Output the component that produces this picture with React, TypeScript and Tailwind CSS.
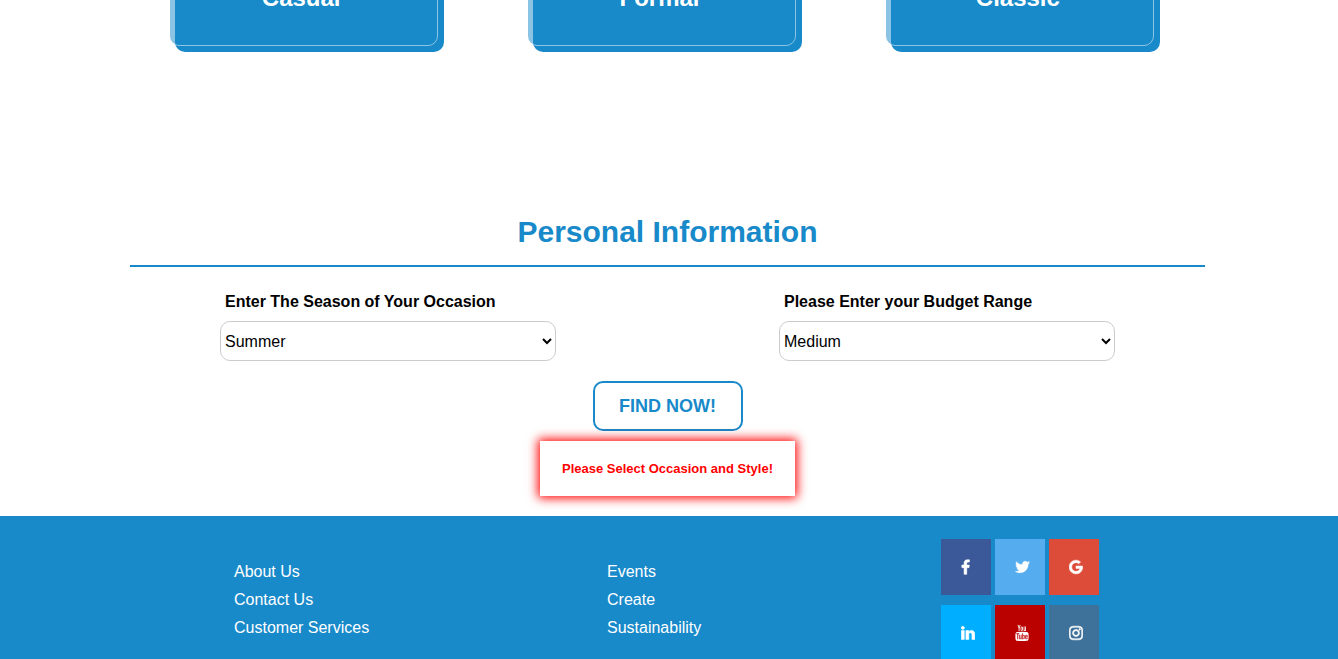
const styles = ['Casual', 'Formal', 'Classic'];
const companyLinks = ['About Us', 'Contact Us', 'Customer Services'];
const siteLinks = ['Events', 'Create', 'Sustainability'];

const facebook =
  'M1343 12v264h-157q-86 0-116 36t-30 108v189h293l-39 296h-254v759h-306v-759h-255v-296h255v-218q0-186 104-288.500t277-102.500q147 0 228 12z';
const twitter =
  'M1684 408q-67 98-162 167 1 14 1 42 0 130-38 259.500t-115.500 248.500-184.500 210.500-258 146-323 54.500q-271 0-496-145 35 4 78 4 225 0 401-138-105-2-188-64.500t-114-159.500q33 5 61 5 43 0 85-11-112-23-185.500-111.500t-73.500-205.500v-4q68 38 146 41-66-44-105-115t-39-154q0-88 44-163 121 149 294.500 238.500t371.500 99.500q-8-38-8-74 0-134 94.500-228.500t228.500-94.500q140 0 236 102 109-21 205-78-37 115-142 178 93-10 186-50z';
const google =
  'M896 786h725q12 67 12 128 0 217-91 387.500t-259.500 266.500-386.500 96q-157 0-299-60.500t-245-163.500-163.500-245-60.500-299 60.500-299 163.500-245 245-163.500 299-60.500q300 0 515 201l-209 201q-123-119-306-119-129 0-238.500 65t-173.500 176.500-64 243.500 64 243.500 173.500 176.500 238.500 65q87 0 160-24t120-60 82-82 51.500-87 22.500-78h-436v-264z';
const linkedin =
  'M477 625v991h-330v-991h330zm21-306q1 73-50.500 122t-135.500 49h-2q-82 0-132-49t-50-122q0-74 51.500-122.500t134.500-48.500 133 48.500 51 122.500zm1166 729v568h-329v-530q0-105-40.500-164.500t-126.500-59.500q-63 0-105.500 34.500t-63.500 85.500q-11 30-11 81v553h-329q2-399 2-647t-1-296l-1-48h329v144h-2q20-32 41-56t56.500-52 87-43.500 114.500-15.500q171 0 275 113.500t104 332.500z';
const youtube =
  'M1099 1244v211q0 67-39 67-23 0-45-22v-301q22-22 45-22 39 0 39 67zm338 1v46h-90v-46q0-68 45-68t45 68zm-966-218h107v-94h-312v94h105v569h100v-569zm288 569h89v-494h-89v378q-30 42-57 42-18 0-21-21-1-3-1-35v-364h-89v391q0 49 8 73 12 37 58 37 48 0 102-61v54zm429-148v-197q0-73-9-99-17-56-71-56-50 0-93 54v-217h-89v663h89v-48q45 55 93 55 54 0 71-55 9-27 9-100zm338-10v-13h-91q0 51-2 61-7 36-40 36-46 0-46-69v-87h179v-103q0-79-27-116-39-51-106-51-68 0-107 51-28 37-28 116v173q0 79 29 116 39 51 108 51 72 0 108-53 18-27 21-54 2-9 2-58zm-608-913v-210q0-69-43-69t-43 69v210q0 70 43 70t43-70zm719 751q0 234-26 350-14 59-58 99t-102 46q-184 21-555 21t-555-21q-58-6-102.500-46t-57.500-99q-26-112-26-350 0-234 26-350 14-59 58-99t103-47q183-20 554-20t555 20q58 7 102.500 47t57.500 99q26 112 26 350zm-998-1276h102l-121 399v271h-100v-271q-14-74-61-212-37-103-65-187h106l71 263zm370 333v175q0 81-28 118-38 51-106 51-67 0-105-51-28-38-28-118v-175q0-80 28-117 38-51 105-51 68 0 106 51 28 37 28 117zm335-162v499h-91v-55q-53 62-103 62-46 0-59-37-8-24-8-75v-394h91v367q0 33 1 35 3 22 21 22 27 0 57-43v-381h91z';
const instagram =
  'M1152 896q0-106-75-181t-181-75-181 75-75 181 75 181 181 75 181-75 75-181zm138 0q0 164-115 279t-279 115-279-115-115-279 115-279 279-115 279 115 115 279zm108-410q0 38-27 65t-65 27-65-27-27-65 27-65 65-27 65 27 27 65zm-502-220q-7 0-76.500-.5t-105.500 0-96.500 3-103 10-71.500 18.500q-50 20-88 58t-58 88q-11 29-18.500 71.500t-10 103-3 96.500 0 105.500.5 76.500-.5 76.500 0 105.500 3 96.500 10 103 18.500 71.500q20 50 58 88t88 58q29 11 71.500 18.500t103 10 96.500 3 105.500 0 76.500-.5 76.500.5 105.500 0 96.500-3 103-10 71.500-18.500q50-20 88-58t58-88q11-29 18.500-71.500t10-103 3-96.500 0-105.500-.5-76.500.5-76.500 0-105.500-3-96.500-10-103-18.500-71.500q-20-50-58-88t-88-58q-29-11-71.500-18.500t-103-10-96.500-3-105.500 0-76.500.5zm768 630q0 229-5 317-10 208-124 322t-322 124q-88 5-317 5t-317-5q-208-10-322-124t-124-322q-5-88-5-317t5-317q10-208 124-322t322-124q88-5 317-5t317 5q208 10 322 124t124 322q5 88 5 317z';

function Glyph({ d, box, className, weight = 60 }: { d: string; box: string; className: string; weight?: number }) {
  return (
    <svg viewBox={box} className={className} fill="currentColor" stroke="currentColor" strokeWidth={weight} aria-hidden="true">
      <path d={d} />
    </svg>
  );
}

const socials = [
  { name: 'Facebook', color: 'bg-[#3b5998]', icon: <Glyph d={facebook} box="384 -64 1024 1792" className="h-4 w-[9px]" /> },
  { name: 'Twitter', color: 'bg-[#55acee]', icon: <Glyph d={twitter} box="64 0 1664 1792" className="h-4 w-[15px]" /> },
  { name: 'Google', color: 'bg-[#dd4b39]', icon: <Glyph d={google} box="112 0 1568 1792" className="h-4 w-[14px]" /> },
  { name: 'LinkedIn', color: 'bg-[#00aeff]', icon: <Glyph d={linkedin} box="112 0 1568 1792" className="h-4 w-[14px]" /> },
  { name: 'YouTube', color: 'bg-[#bb0000]', icon: <Glyph d={youtube} box="112 0 1568 1792" className="h-4 w-[14px]" weight={0} /> },
  { name: 'Instagram', color: 'bg-[#3f729b]', icon: <Glyph d={instagram} box="112 0 1568 1792" className="h-4 w-[14px]" /> },
];

function StyleCard({ name }: { name: string }) {
  return (
    <div className="flex justify-center">
      <div className="relative h-[320px] w-3/4 rounded-[10px] bg-[#1889c9]">
        <div className="absolute -left-1.5 bottom-1.5 h-full w-full rounded-[10px] border border-white bg-[#1889c9] opacity-50" />
        <div className="relative flex h-full items-end justify-center pr-4 pb-[38px]">
          <h3 className="text-2xl font-bold text-white">{name}</h3>
        </div>
      </div>
    </div>
  );
}

function SelectField({ id, label, options }: { id: string; label: string; options: string[] }) {
  return (
    <div className="flex w-[336px] flex-col gap-[7px]">
      <label htmlFor={id} className="pl-[5px] text-base font-bold">
        {label}
      </label>
      <select id={id} className="h-10 w-full rounded-[10px] border border-[#cccccc] bg-white text-base text-black">
        {options.map((option) => (
          <option key={option}>{option}</option>
        ))}
      </select>
    </div>
  );
}

function LinkColumn({ links }: { links: string[] }) {
  return (
    <ul className="flex flex-col gap-1 pt-[21px]">
      {links.map((link) => (
        <li key={link}>
          <a href="#" className="text-base text-white">
            {link}
          </a>
        </li>
      ))}
    </ul>
  );
}

export default function App() {
  return (
    <div className="flex h-screen flex-col overflow-hidden bg-white font-['Liberation_Sans',Arial,sans-serif] text-black">
      <main className="-mt-[268px] shrink-0 pr-[133px] pb-5 pl-[130px]">
        <section className="grid grid-cols-3" aria-label="Style">
          {styles.map((name) => (
            <StyleCard key={name} name={name} />
          ))}
        </section>

        <section className="pt-40">
          <h2 className="border-b-2 border-[#1889c9] pb-3.5 text-center text-[30px] leading-[39px] font-bold text-[#1889c9]">
            Personal Information
          </h2>
          <form className="flex flex-col items-center" onSubmit={(event) => event.preventDefault()}>
            <div className="flex w-full justify-between px-[90px] pt-[23px]">
              <SelectField
                id="season"
                label="Enter The Season of Your Occasion"
                options={['Summer', 'Winter', 'Spring', 'Autumn']}
              />
              <SelectField id="budget" label="Please Enter your Budget Range" options={['Medium', 'Low', 'High']} />
            </div>
            <button
              type="submit"
              className="mt-5 h-[50px] w-[150px] rounded-[10px] border-2 border-[#1889c9] bg-white text-lg font-bold text-[#1889c9]"
            >
              FIND NOW!
            </button>
            <p
              role="alert"
              className="mt-2.5 bg-white px-[22px] text-[13px] leading-[55px] font-bold text-[#ff0000] shadow-[0_0_10px_2px_#ff0000]"
            >
              Please Select Occasion and Style!
            </p>
          </form>
        </section>
      </main>

      <footer className="grid shrink-0 grid-cols-[373fr_334fr_397fr] bg-[#1889c9] pt-[23px] pb-6 pl-[234px]">
        <LinkColumn links={companyLinks} />
        <LinkColumn links={siteLinks} />
        <div className="grid grid-cols-[50px_50px_50px] content-start gap-x-1 gap-y-2.5">
          {socials.map(({ name, color, icon }) => (
            <a key={name} href="#" aria-label={name} className={`flex h-14 items-center pl-5 text-white ${color}`}>
              {icon}
            </a>
          ))}
        </div>
      </footer>
    </div>
  );
}
